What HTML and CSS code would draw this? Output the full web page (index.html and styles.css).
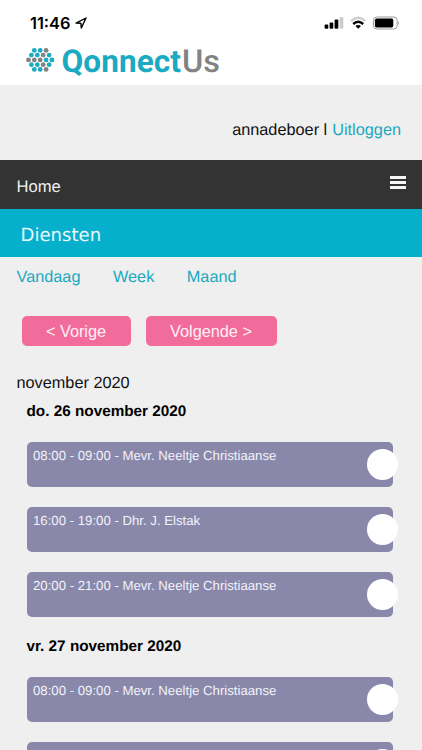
FILE: index.html
```html
<!DOCTYPE html>
<html lang="nl">
<head>
    <meta charset="UTF-8">
    <meta name="viewport" content="width=device-width, initial-scale=1.0">
    <title>QonnectUs - Diensten</title>
    <link rel="stylesheet" href="styles.css">
</head>
<body>
    <header class="top">
        <div class="status-bar">
            <span class="time">11:46</span>
            <svg class="location" width="12" height="12" viewBox="0 0 12 12">
                <path d="M1 6.1 L11 1 L6.3 11 L5.9 6.2 Z" fill="none" stroke="#000" stroke-width="1.4" stroke-linejoin="round"/>
            </svg>
            <svg class="signals" width="76" height="14" viewBox="0 0 76 14">
                <!-- mobile signal -->
                <rect x="0.6" y="8.4" width="3.7" height="4.4" rx="1"/>
                <rect x="5.6" y="6.4" width="3.7" height="6.4" rx="1"/>
                <rect x="10.6" y="3.6" width="3.7" height="9.2" rx="1"/>
                <rect x="15.6" y="0.9" width="3.7" height="11.9" rx="1" fill="#ccc"/>
                <!-- wifi -->
                <path d="M27 5 Q34.2 -1.4 41.4 5" fill="none" stroke="#ccc" stroke-width="2.3"/>
                <path d="M29.2 8 Q34.2 3.4 39.2 8" fill="none" stroke="#000" stroke-width="2.4"/>
                <path d="M31.4 10 Q34.2 7.8 37 10 L34.2 12.8 Z"/>
                <!-- battery -->
                <rect x="49.4" y="1" width="23.8" height="12" rx="3.4" fill="none" stroke="#999"/>
                <rect x="50.9" y="2.5" width="18.4" height="9" rx="1.8"/>
                <path d="M74.2 5 Q76 7 74.2 9 Z" fill="#999"/>
            </svg>
        </div>
        <svg class="logo" width="200" height="44" viewBox="0 -6 200 44">
            <g fill="#1aaac2" transform="translate(0.6 -0.9)">
                <circle cx="8.7" cy="6.3" r="2.4"/>
                <circle cx="14.6" cy="6.3" r="2.4"/>
                <circle cx="20.5" cy="6.3" r="2.4" fill="#838383"/>
                <circle cx="5.8" cy="11" r="2.4"/>
                <circle cx="11.7" cy="11" r="2.4"/>
                <circle cx="17.6" cy="11" r="2.4" fill="#838383"/>
                <circle cx="23.5" cy="11" r="2.4"/>
                <circle cx="2.9" cy="15.8" r="2.4" fill="#838383"/>
                <circle cx="8.7" cy="15.8" r="2.4" fill="#838383"/>
                <circle cx="14.6" cy="15.8" r="2.4" fill="#838383"/>
                <circle cx="20.5" cy="15.8" r="2.4"/>
                <circle cx="26.3" cy="15.8" r="2.4"/>
                <circle cx="5.8" cy="20.6" r="2.4"/>
                <circle cx="11.7" cy="20.6" r="2.4"/>
                <circle cx="17.6" cy="20.6" r="2.4" fill="#838383"/>
                <circle cx="23.5" cy="20.6" r="2.4"/>
                <circle cx="8.7" cy="25.3" r="2.4"/>
                <circle cx="14.6" cy="25.3" r="2.4"/>
                <circle cx="20.5" cy="25.3" r="2.4" fill="#838383"/>
            </g>
            <text class="logo-main" x="36.5" y="26.6" textLength="119.5">Qonnect</text>
            <text class="logo-end" x="157" y="26.6" textLength="38" lengthAdjust="spacingAndGlyphs">Us</text>
        </svg>
    </header>

    <div class="user">
        <span>annadeboer l</span>
        <a href="#">Uitloggen</a>
    </div>

    <nav class="menu">
        <a href="#">Home</a>
        <div class="hamburger"><i></i><i></i><i></i></div>
    </nav>

    <h1>Diensten</h1>

    <main>
        <div class="tabs">
            <a href="#">Vandaag</a>
            <a href="#">Week</a>
            <a href="#">Maand</a>
        </div>
        <div class="buttons">
            <button class="prev">&lt; Vorige</button>
            <button class="next">Volgende &gt;</button>
        </div>
        <p class="month">november 2020</p>

        <section class="day">
            <h2>do. 26 november 2020</h2>
            <div class="shift"><span>08:00 - 09:00 - Mevr. Neeltje Christiaanse</span><i class="dot"></i></div>
            <div class="shift"><span>16:00 - 19:00 - Dhr. J. Elstak</span><i class="dot"></i></div>
            <div class="shift"><span>20:00 - 21:00 - Mevr. Neeltje Christiaanse</span><i class="dot"></i></div>
        </section>
        <section class="day">
            <h2>vr. 27 november 2020</h2>
            <div class="shift"><span>08:00 - 09:00 - Mevr. Neeltje Christiaanse</span><i class="dot"></i></div>
            <div class="shift"><i class="dot"></i></div>
        </section>
    </main>
</body>
</html>
```
FILE: styles.css
```css
* {
    margin: 0;
    padding: 0;
    box-sizing: border-box;
}

html {
    height: 750px;
    overflow: hidden;
}

body {
    height: 750px;
    overflow: hidden;
    background: #efefef;
    font-family: "Liberation Sans", Arial, sans-serif;
    font-size: 16.3px;
    color: #111;
    text-rendering: geometricPrecision;
}

a {
    color: #1ba9c0;
    text-decoration: none;
}

.top {
    height: 85px;
    background: #fff;
}

.status-bar {
    display: flex;
    align-items: center;
    height: 45px;
    padding: 1px 22px 0 30px;
}

.time {
    width: 42px;
    font-family: Inter, sans-serif;
    font-size: 16.4px;
    font-weight: 600;
    color: #000;
}

.location {
    margin-left: 3px;
}

.signals {
    margin-left: auto;
}

.logo {
    display: block;
    margin: -6px 0 0 25px;
}

.logo-main,
.logo-end {
    font-family: Roboto, sans-serif;
    font-size: 31.5px;
    font-weight: 700;
    fill: #1aaac2;
}

.logo-end {
    font-weight: 500;
    fill: #838383;
}

.user {
    display: flex;
    justify-content: flex-end;
    align-items: center;
    gap: 5px;
    height: 75px;
    padding: 16px 21px 0 0;
}

.menu {
    display: flex;
    justify-content: space-between;
    height: 49px;
    padding: 16px 16px 0 16.5px;
    background: #333;
}

.menu a {
    padding-top: 1px;
    color: #eee;
    font-size: 16.6px;
}

.hamburger {
    display: flex;
    flex-direction: column;
    gap: 2px;
    width: 16px;
}

.hamburger i {
    height: 3px;
    background: #f5f5f5;
}

h1 {
    height: 48px;
    padding-left: 20.5px;
    background: #06afcb;
    color: #e8fafd;
    font-family: "DejaVu Sans", sans-serif;
    font-size: 18.1px;
    font-weight: 400;
    line-height: 53px;
}

main {
    padding: 0 16px 0 16.5px;
}

.tabs {
    display: flex;
    gap: 32.5px;
    padding-top: 11px;
    line-height: 18px;
}

.buttons {
    display: flex;
    gap: 15px;
    padding: 30px 5px 0;
}

button {
    height: 30px;
    border: none;
    border-radius: 5px;
    background: #f16c9a;
    color: #fff0f5;
    font-family: inherit;
    font-size: 16.3px;
}

.prev {
    width: 109px;
}

.next {
    width: 131px;
}

.month {
    margin-top: 28px;
    line-height: 18px;
}

.day {
    padding: 0 13px 0 10px;
}

h2 {
    height: 18px;
    margin: 11px 0 21px;
    color: #000;
    font-size: 15.3px;
    line-height: 17px;
}

.shift {
    position: relative;
    height: 45px;
    margin-bottom: 20px;
    padding: 5px 6.5px;
    border-radius: 5px;
    background: #8988ab;
    color: #f3f3fa;
    font-size: 13.2px;
    line-height: 18px;
}

.shift:last-child {
    margin-bottom: 21px;
}

.dot {
    position: absolute;
    top: 7px;
    right: -5px;
    width: 31px;
    height: 31px;
    border-radius: 50%;
    background: #fff;
}
```
